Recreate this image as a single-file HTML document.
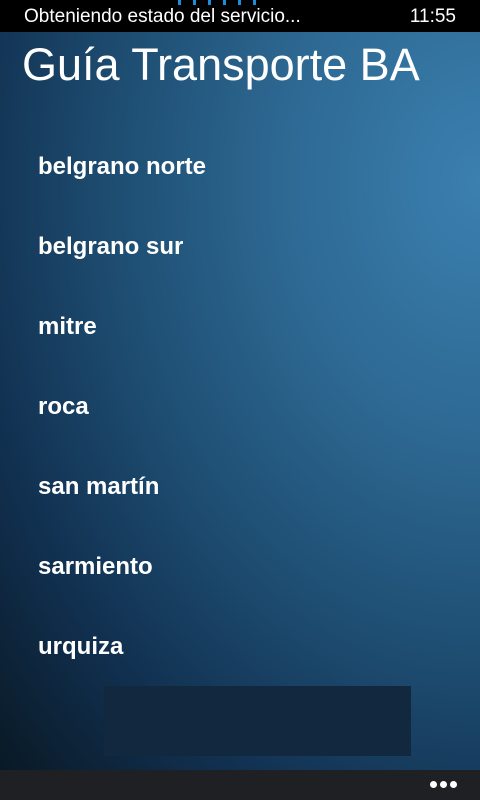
<!DOCTYPE html>
<html><head><meta charset="utf-8"><style>
*{margin:0;padding:0}
body{width:480px;height:800px;overflow:hidden;position:relative;font-family:"Liberation Sans",sans-serif;background:#000}
.bg{position:absolute;left:0;top:32px;width:480px;height:738px;background:radial-gradient(ellipse 680px 880px at 480px 150px,#3b80b0 0%,#2d6892 30%,#1d4c70 55%,#113050 76%,#08161f 100%)}
.sb{position:absolute;top:0;left:0;width:480px;height:32px;background:#000;color:#fff;font-size:19px}
.sb .l{position:absolute;left:24px;top:6px}
.sb .r{position:absolute;right:24px;top:6px}
.dots{position:absolute;top:0;left:178px}
.dots i{position:absolute;top:0;width:3px;height:5px;background:#1e8fd6}
h1{position:absolute;left:22px;top:39px;font-weight:normal;font-size:45px;color:#fff;letter-spacing:0}
.it{position:absolute;left:38px;color:#fff;font-size:24px;font-weight:bold}
.box{position:absolute;left:104px;top:686px;width:307px;height:70px;background:#12283e}
.ab{position:absolute;left:0;top:770px;width:480px;height:30px;background:#1f2023}
.ab i{position:absolute;top:11px;width:7px;height:7px;border-radius:50%;background:#fff}
</style></head><body>
<div class="bg"></div>
<div class="sb"><span class="l">Obteniendo estado del servicio...</span><span class="r">11:55</span>
<div class="dots"><i style="left:0"></i><i style="left:15px"></i><i style="left:30px"></i><i style="left:45px"></i><i style="left:60px"></i><i style="left:75px"></i></div></div>
<h1>Guía Transporte BA</h1>
<div class="it" style="top:153px">belgrano norte</div>
<div class="it" style="top:233px">belgrano sur</div>
<div class="it" style="top:313px">mitre</div>
<div class="it" style="top:393px">roca</div>
<div class="it" style="top:473px">san martín</div>
<div class="it" style="top:553px">sarmiento</div>
<div class="it" style="top:633px">urquiza</div>
<div class="box"></div>
<div class="ab"><i style="left:430px"></i><i style="left:440px"></i><i style="left:450px"></i></div>
</body></html>
